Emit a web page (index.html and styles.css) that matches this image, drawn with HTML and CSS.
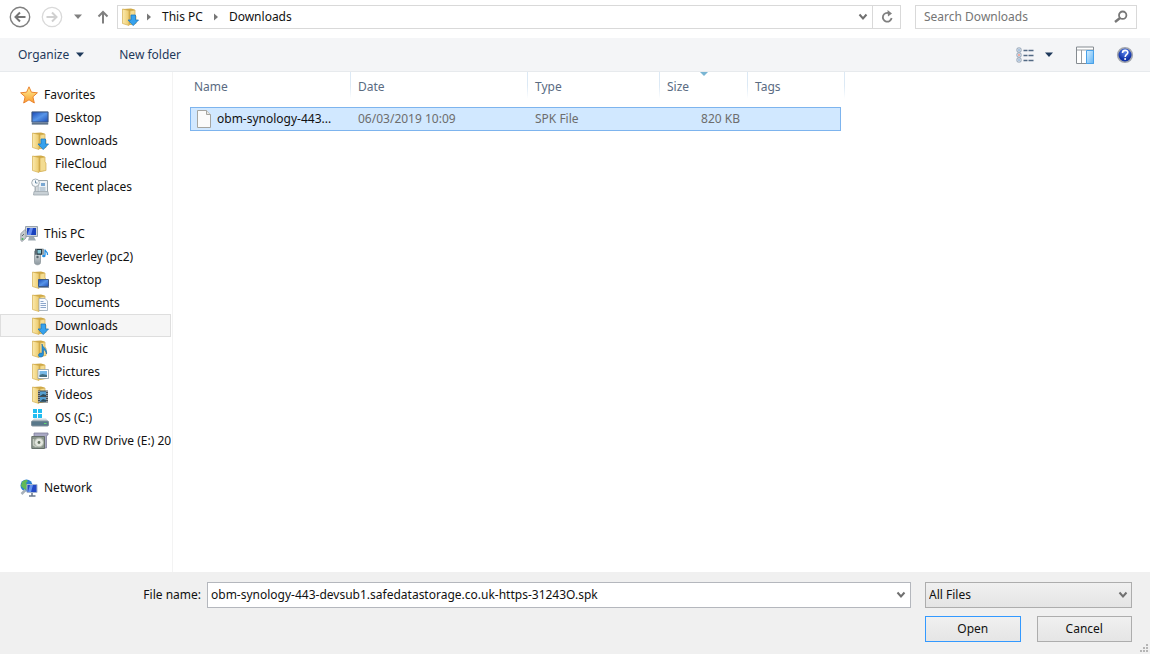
FILE: index.html
```html
<!DOCTYPE html>
<html lang="en">
<head>
<meta charset="utf-8">
<title>Open</title>
<link rel="stylesheet" href="styles.css">
</head>
<body>
<svg class="defs" aria-hidden="true">
  <defs>
    <linearGradient id="gold"><stop offset="0" stop-color="#fbeaae"/><stop offset="1" stop-color="#ecca6c"/></linearGradient>
    <linearGradient id="screen" x2="1" y2="1"><stop offset="0" stop-color="#1747b5"/><stop offset=".5" stop-color="#5795e8"/><stop offset="1" stop-color="#1d4eb8"/></linearGradient>
    <linearGradient id="metal" x2="0" y2="1"><stop offset="0" stop-color="#e3e7e9"/><stop offset="1" stop-color="#8b979e"/></linearGradient>
    <linearGradient id="starfill" x2="0" y2="1"><stop offset="0" stop-color="#fff39a"/><stop offset="1" stop-color="#f99b2c"/></linearGradient>
    <linearGradient id="pane" x2="1" y2="1"><stop offset="0" stop-color="#d5eeff"/><stop offset="1" stop-color="#62b4f4"/></linearGradient>
    <radialGradient id="helpfill" cy=".3"><stop offset="0" stop-color="#5b86ee"/><stop offset="1" stop-color="#1234a8"/></radialGradient>
    <symbol id="folder" viewBox="0 0 18 18">
      <path d="M2 1l8-.5 3.500 1V16L7 17z" fill="#cfa845"/>
      <path d="M9 3l5-1v5l1 1v7.500l-6 1z" fill="#f3dc92" stroke="#d3ae50" stroke-width=".7"/>
      <path d="M1.500 1L8 2.500v15L1.500 15.500z" fill="url(#gold)" stroke="#d3ae50" stroke-width=".7"/>
    </symbol>
    <symbol id="downloads" viewBox="0 0 18 18">
      <use href="#folder"/>
      <path d="M10 7h4.500v5h3L12.200 17.600 7 12h3z" fill="#36a2ee" stroke="#1b78c0" stroke-width=".8"/>
    </symbol>
    <symbol id="desktop" viewBox="0 0 18 18">
      <path d="M.5 2.500h17v13H.5z" fill="#a9b7c5"/>
      <path d="M1 3h16v10H1z" fill="url(#screen)" stroke="#3c5680"/>
      <path d="M1 14h16v1.500H1z" fill="#5f7389"/>
    </symbol>
    <symbol id="folder-desktop" viewBox="0 0 18 18">
      <use href="#folder"/>
      <path d="M7.500 8.500h10v7h-10z" fill="url(#screen)" stroke="#3c5987"/><path d="M7 16.500h11" stroke="#8898a9"/>
    </symbol>
    <symbol id="documents" viewBox="0 0 18 18">
      <use href="#folder"/>
      <path d="M8 4.500h6l2.500 2.500v9.500H8z" fill="#f8fbff" stroke="#9ba9b8" stroke-width=".8"/>
      <path d="M9.500 7.500h3m-3 2h5.500m-5.500 2h5.500m-5.500 2h5.500" stroke="#6e91bd" stroke-width=".8"/>
    </symbol>
    <symbol id="music" viewBox="0 0 18 18">
      <use href="#folder"/>
      <path d="M11 4c.5 4 5.500 4 4.500 10-.5-3-2-4-3-4.500v5c0 3-5 3.500-5 .8 0-2 2-2.500 3.500-2z" fill="#2793dc" stroke="#176aa8" stroke-width=".6"/>
    </symbol>
    <symbol id="pictures" viewBox="0 0 18 18">
      <use href="#folder"/>
      <path d="M7 6.500h10.500v9H7z" fill="#fff" stroke="#8e9eaa" stroke-width=".8"/>
      <path d="M8.500 8h7.500v6H8.500z" fill="#78b9e7"/><path d="M8.500 14v-2l3-1 4.500 1v2z" fill="#456f82"/>
    </symbol>
    <symbol id="videos" viewBox="0 0 18 18">
      <use href="#folder"/>
      <path d="M7 4.500h10v12H7z" fill="#474d53"/><path d="M9 5.500h6v4.500H9zm0 5.500h6v4.500H9z" fill="#559ed0"/>
      <path d="M9 10l3-2 3 1v1zm0 5.500l3-2.500 3 1v1.500z" fill="#294b5d"/>
      <path d="M8 5v11M16 5v11" stroke="#dde2e5" stroke-dasharray="1 1"/>
    </symbol>
    <symbol id="star" viewBox="0 0 18 18">
      <path d="M9 .8l2.400 5.400 6 .6-4.500 4 1.400 6.200L9 13.800 3.700 17l1.400-6.200-4.500-4 6-.6z" fill="url(#starfill)" stroke="#ea8430"/>
    </symbol>
    <symbol id="recent" viewBox="0 0 18 18">
      <path d="M7 2.500h9.500v12H7z" fill="#edf2f6" stroke="#9aa6ae"/>
      <path d="M10 5h4v3h-4z" fill="#79a7d2"/><path d="M8.500 10h6m-6 2h6" stroke="#8fa6b9"/>
      <path d="M3 13.500h14l.5 3.500H2.500z" fill="#c8d0d5" stroke="#9da7ad" stroke-width=".8"/>
      <path d="M4.500 9v5" stroke="#aab3b9" stroke-width="2"/>
      <circle cx="4.500" cy="4.800" r="3.800" fill="#f6f9fb" stroke="#a5aeb4"/><path d="M4.500 2.500v2.500h2" fill="none" stroke="#4c718d" stroke-width=".8"/>
    </symbol>
    <symbol id="computer" viewBox="0 0 18 18">
      <path d="M5.500 1.500h12v10h-12z" fill="#ccd3da" stroke="#9aa4ad"/>
      <path d="M7 3h9v7H7z" fill="#1a42bd"/><path d="M10 3h3l-2 7H7z" fill="#668cf0"/>
      <path d="M9 12h5l2 3.500H8z" fill="#9daab2"/>
      <path d="M.8 8.500L4.500 5l1.500 1v7l-4 3.500-1.200-1z" fill="#c3c9cc" stroke="#8b949a" stroke-width=".8"/><path d="M2 11l2-2" stroke="#5e676d"/><circle cx="2.500" cy="14" r="1" fill="#48b35a"/>
    </symbol>
    <symbol id="phone" viewBox="0 0 18 18">
      <path d="M3.500 3h6v11.500c0 3-6 3-6 0z" fill="url(#metal)" stroke="#8b959a" stroke-width=".8"/>
      <circle cx="6.500" cy="9" r="1.200" fill="#56656d"/>
      <path d="M4 .8h8.500v6H4z" fill="#263a44"/><path d="M5 1.500v5m6.500-5v5" stroke="#fff" stroke-dasharray="1 1"/><path d="M6.500 2h3.500v3.500H6.500z" fill="#83c6d6"/>
      <path d="M14 1.500v6M14 2c.5 2 3 1 2.500 5" fill="none" stroke="#258fe2" stroke-width="1.300"/><ellipse cx="12.800" cy="8" rx="1.700" ry="1.300" fill="#258fe2"/>
    </symbol>
    <symbol id="drive" viewBox="0 0 18 18">
      <path d="M2 0h4v4H2zm5 0h4v4H7zM2 5h4v4H2zm5 0h4v4H7z" fill="#21bdf1"/>
      <path d="M3 9.500h12l2.500 3H.5z" fill="#d0d8dd"/><rect x=".5" y="12" width="17" height="5" rx="1" fill="#59788a" stroke="#80909a"/><path d="M13 14.500h2.500" stroke="#61dc6e"/>
    </symbol>
    <symbol id="dvd" viewBox="0 0 18 18">
      <path d="M3 1h14v2l-1.500.5v12.500H3z" fill="#a9a9c4" stroke="#82829c" stroke-width=".8"/>
      <path d="M.8 4.500h12.700v12H.8z" fill="#8a958c" stroke="#66706a"/>
      <circle cx="8" cy="10.500" r="4.500" fill="#e3e7df" stroke="#a9b0a4"/><circle cx="8" cy="10.500" r="1.400" fill="#63705f"/>
      <path d="M2.500 7v6l3 2" fill="none" stroke="#c5ccc1" stroke-width="1.500"/>
    </symbol>
    <symbol id="network" viewBox="0 0 18 18">
      <circle cx="6.500" cy="6.500" r="6" fill="#287fcf"/><path d="M2 3c3-3 5-2 6-1L6 4l2 3-2 4-3-2-2-2z" fill="#61b957"/>
      <path d="M7 5.500h10v8H7z" fill="#2449c5" stroke="#a7b6ce"/><path d="M10 6h3l-2 7H8z" fill="#6694ee"/>
      <path d="M12 14v2.500M9 17h6.500" stroke="#68778c" stroke-width="1.500"/>
      <path d="M1.500 15l4-4" stroke="#a8b1ba" stroke-width="2.500"/>
    </symbol>
    <symbol id="chevron" viewBox="0 0 10 8"><path d="M1.500 1.500L5 5.500l3.500-4" fill="none" stroke="currentColor" stroke-width="2"/></symbol>
    <symbol id="caret-down" viewBox="0 0 10 6"><path d="M1 .5h8L5 5z" fill="currentColor"/></symbol>
    <symbol id="caret-right" viewBox="0 0 6 8"><path d="M1 .5v7L5 4z" fill="currentColor"/></symbol>
  </defs>
</svg>

<div class="dialog">
  <header class="navbar">
    <div class="history">
      <button class="plain" type="button" aria-label="Back">
        <svg class="round" viewBox="0 0 22 22"><circle cx="11" cy="11" r="9.700" fill="none" stroke="#808080" stroke-width="1.400"/><path d="M16.500 11H6.500m4.500-4.500L6.500 11l4.500 4.500" fill="none" stroke="#757575" stroke-width="2"/></svg>
      </button>
      <button class="plain" type="button" aria-label="Forward">
        <svg class="round" viewBox="0 0 22 22"><circle cx="11" cy="11" r="9.700" fill="none" stroke="#d9d9d9" stroke-width="1.300"/><path d="M5.500 11h10M11 6.500l4.500 4.500-4.500 4.500" fill="none" stroke="#d0d0d0" stroke-width="2"/></svg>
      </button>
      <button class="plain grey" type="button" aria-label="Recent locations"><svg class="caret"><use href="#caret-down"/></svg></button>
      <button class="plain up" type="button" aria-label="Up one level">
        <svg class="arrow" viewBox="0 0 12 14"><path d="M6 13.500V2M1.500 6.500L6 2l4.500 4.500" fill="none" stroke="#808080" stroke-width="2"/></svg>
      </button>
    </div>
    <div class="address">
      <svg class="icon"><use href="#downloads"/></svg>
      <div class="crumbs">
        <svg class="crumb-mark"><use href="#caret-right"/></svg>
        <button class="plain" type="button">This PC</button>
        <svg class="crumb-mark"><use href="#caret-right"/></svg>
        <button class="plain" type="button">Downloads</button>
      </div>
      <button class="plain history-drop" type="button" aria-label="Previous locations"><svg class="chevron"><use href="#chevron"/></svg></button>
      <button class="plain refresh" type="button" aria-label="Refresh">
        <svg class="small" viewBox="0 0 14 14"><path d="M9 3.200A4.400 4.400 0 1 0 11.600 8" fill="none" stroke="#808080" stroke-width="1.800"/><path d="M7.500 0l4.500 3.500-4 3z" fill="#808080"/></svg>
      </button>
    </div>
    <div class="search">
      <input class="search-input" type="search" placeholder="Search Downloads" aria-label="Search Downloads">
      <svg class="small" viewBox="0 0 14 14"><circle cx="8.700" cy="5.200" r="3.700" fill="none" stroke="#777" stroke-width="1.800"/><path d="M6 8l-5 4" stroke="#777" stroke-width="2.400"/></svg>
    </div>
  </header>

  <div class="toolbar">
    <button class="plain organize" type="button">Organize <svg class="caret"><use href="#caret-down"/></svg></button>
    <button class="plain" type="button">New folder</button>
    <div class="view-tools">
      <button class="plain views" type="button" aria-label="Change your view">
        <svg class="icon" viewBox="0 0 18 18"><g fill="#fff" stroke="#899bb0"><rect x="1" y="2" width="4" height="4" rx="1"/><rect x="1" y="7" width="4" height="4" rx="1"/><rect x="1" y="12" width="4" height="4" rx="1"/></g><path d="M2 9h2" stroke="#e55b49"/><path d="M2 4h2m-2 10h2" stroke="#5a8cc4"/><path d="M7.500 4.500h4m1 0h5m-10 5h4m1 0h5m-10 5h4m1 0h5" stroke="#536a84" stroke-width="1.300"/></svg>
        <svg class="caret"><use href="#caret-down"/></svg>
      </button>
      <button class="plain" type="button" aria-label="Show the preview pane">
        <svg class="icon" viewBox="0 0 18 18"><path d="M.5 1h17v16.500H.5z" fill="#fff" stroke="#858b91"/><path d="M1 4h16M5.500 4v13" stroke="#999ea3"/><path d="M10.500 4.500h7v13h-7z" fill="url(#pane)" stroke="#48a1e9"/></svg>
      </button>
      <button class="plain" type="button" aria-label="Get help">
        <svg class="icon" viewBox="0 0 18 18"><circle cx="9" cy="9" r="7.300" fill="url(#helpfill)" stroke="#a3a6ad" stroke-width="1.600"/><path d="M6.500 7c0-3.500 5.500-3.300 5.300-.3C11.700 8.400 9.300 8.600 9.200 11" fill="none" stroke="#fff" stroke-width="1.600"/><circle cx="9.100" cy="13" r="1" fill="#fff"/></svg>
      </button>
    </div>
  </div>

  <main class="content">
    <nav class="tree" aria-label="Folders">
      <section class="group">
        <a class="node root" href="#"><svg class="icon"><use href="#star"/></svg>Favorites</a>
        <a class="node" href="#"><svg class="icon"><use href="#desktop"/></svg>Desktop</a>
        <a class="node" href="#"><svg class="icon"><use href="#downloads"/></svg>Downloads</a>
        <a class="node" href="#"><svg class="icon"><use href="#folder"/></svg>FileCloud</a>
        <a class="node" href="#"><svg class="icon"><use href="#recent"/></svg>Recent places</a>
      </section>
      <section class="group">
        <a class="node root" href="#"><svg class="icon"><use href="#computer"/></svg>This PC</a>
        <a class="node" href="#"><svg class="icon"><use href="#phone"/></svg>Beverley (pc2)</a>
        <a class="node" href="#"><svg class="icon"><use href="#folder-desktop"/></svg>Desktop</a>
        <a class="node" href="#"><svg class="icon"><use href="#documents"/></svg>Documents</a>
        <a class="node current" href="#" aria-current="true"><svg class="icon"><use href="#downloads"/></svg>Downloads</a>
        <a class="node" href="#"><svg class="icon"><use href="#music"/></svg>Music</a>
        <a class="node" href="#"><svg class="icon"><use href="#pictures"/></svg>Pictures</a>
        <a class="node" href="#"><svg class="icon"><use href="#videos"/></svg>Videos</a>
        <a class="node" href="#"><svg class="icon"><use href="#drive"/></svg>OS (C:)</a>
        <a class="node" href="#"><svg class="icon"><use href="#dvd"/></svg>DVD RW Drive (E:) 20</a>
      </section>
      <section class="group">
        <a class="node root" href="#"><svg class="icon"><use href="#network"/></svg>Network</a>
      </section>
    </nav>
    <div class="files">
      <table class="list">
        <colgroup><col class="c-name"><col class="c-date"><col class="c-type"><col class="c-size"><col class="c-tags"><col class="c-edge"></colgroup>
        <thead>
          <tr><th scope="col">Name</th><th scope="col">Date</th><th scope="col">Type</th><th scope="col" class="sorted" aria-sort="descending">Size<svg class="sort" viewBox="0 0 10 5"><path d="M1 0h8L5 4z" fill="#79b5d3"/></svg></th><th scope="col" colspan="2">Tags</th></tr>
        </thead>
        <tbody>
          <tr class="selected">
            <td><span class="file"><svg class="icon" viewBox="0 0 18 18"><path d="M2.500 .5h9l4 4v13h-13z" fill="#fbfbfa" stroke="#a5a5a0"/><path d="M11.500 .5v4h4" fill="#e7e7e3" stroke="#a5a5a0"/></svg>obm-synology-443...</span></td>
            <td>06/03/2019 10:09</td><td>SPK File</td><td class="size">820 KB</td><td></td>
          </tr>
        </tbody>
      </table>
    </div>
  </main>

  <footer class="footer">
    <label class="name-label" for="filename">File name:</label>
    <div class="combo">
      <input class="name-input" id="filename" type="text" value="obm-synology-443-devsub1.safedatastorage.co.uk-https-31243O.spk">
      <button class="plain" type="button" aria-label="Recent file names"><svg class="chevron"><use href="#chevron"/></svg></button>
    </div>
    <div class="filter">
      <select class="filter-select" aria-label="File type"><option>All Files</option></select>
      <svg class="chevron"><use href="#chevron"/></svg>
    </div>
    <div class="actions">
      <button class="action primary" type="button">Open</button>
      <button class="action" type="button">Cancel</button>
    </div>
    <svg class="grip" viewBox="0 0 10 10" fill="#b5b5b5"><path d="M7 0h2v2H7zM4 3h2v2H4zm3 0h2v2H7zM1 6h2v2H1zm3 0h2v2H4zm3 0h2v2H7z"/></svg>
  </footer>
</div>
</body>
</html>
```

FILE: styles.css
```css
* { box-sizing: border-box; }

body {
  margin: 0;
  background: #fff;
  color: #111;
  font: 12px/20px "Noto Sans", "Open Sans", sans-serif;
}

button, input, select { font: inherit; color: inherit; }
svg { display: block; flex: none; }

.defs { position: absolute; width: 0; height: 0; }
.icon { width: 18px; height: 18px; }
.small { width: 14px; height: 14px; }
.chevron { width: 10px; height: 8px; color: #707070; }
.caret { width: 10px; height: 6px; }

.plain {
  display: flex;
  align-items: center;
  justify-content: center;
  padding: 0;
  border: 0;
  background: none;
}

.dialog { display: flex; flex-direction: column; min-height: 100vh; }

.navbar {
  display: flex;
  align-items: center;
  padding: 5px 13px 9px 9px;
}
.history { display: flex; align-items: center; gap: 10px; width: 108px; }
.round { width: 22px; height: 22px; }
.grey { color: #808080; }
.up { margin-left: 4px; }
.arrow { width: 12px; height: 14px; }

.address {
  display: flex;
  align-items: center;
  flex: 1;
  height: 24px;
  padding-left: 3px;
  border: 1px solid #d9d9d9;
}
.crumbs { display: flex; align-items: center; gap: 10px; padding-left: 7px; }
.crumb-mark { width: 6px; height: 8px; color: #777; }
.history-drop { margin-left: auto; width: 18px; height: 22px; }
.refresh { width: 28px; height: 22px; border-left: 1px solid #d9d9d9; }

.search {
  display: flex;
  align-items: center;
  width: 222px;
  height: 24px;
  margin-left: 14px;
  padding: 0 8px;
  border: 1px solid #d9d9d9;
}
.search-input {
  flex: 1;
  min-width: 0;
  padding: 0;
  border: 0;
  outline: 0;
  background: none;
}
.search-input::placeholder { color: #757575; opacity: 1; }

.toolbar {
  display: flex;
  align-items: center;
  height: 34px;
  padding: 0 16px 0 18px;
  border-bottom: 1px solid #e7eaed;
  background: #f4f5f7;
  color: #1e395b;
}
.organize { gap: 6px; margin-right: 34px; }
.view-tools { display: flex; gap: 22px; margin-left: auto; }
.views { gap: 10px; }

.content { display: flex; flex: 1; }

.tree {
  width: 173px;
  flex: none;
  padding-top: 11px;
  border-right: 1px solid #f3f3f3;
}
.group { margin-bottom: 24px; }
.node {
  display: flex;
  align-items: center;
  gap: 6px;
  height: 23px;
  margin-right: 1px;
  padding-left: 31px;
  overflow: hidden;
  color: inherit;
  text-decoration: none;
  white-space: nowrap;
}
.root { padding-left: 20px; }
.current {
  padding-left: 30px;
  border: 1px solid #dedede;
  background: #f6f6f6;
}

.files { flex: 1; min-width: 0; padding-left: 17px; }
.list {
  width: 655px;
  table-layout: fixed;
  border-collapse: separate;
  border-spacing: 0;
}
.c-name { width: 161px; }
.c-date { width: 177px; }
.c-type { width: 132px; }
.c-size { width: 88px; }
.c-tags { width: 93px; }
.c-edge { width: 4px; }

.list th {
  height: 35px;
  padding: 5px 8px 10px 7px;
  border-right: 1px solid;
  border-image: linear-gradient(#dce9f5 40%, #fff 75%) 1;
  color: #5a6b82;
  font-weight: 400;
  line-height: 20px;
  text-align: left;
}
.list th:first-child { padding-left: 4px; }
.sorted { position: relative; }
.sort { position: absolute; top: 0; left: 39px; width: 10px; height: 5px; }

.list td {
  height: 24px;
  padding: 0 8px 0 7px;
  border: solid #7db4ee;
  border-width: 1px 0;
  background: #d1e8ff;
  color: #6d6d6d;
  white-space: nowrap;
}
.list td:first-child { padding: 0 0 0 4px; border-left-width: 1px; color: #111; }
.list td:last-child { border-right-width: 1px; }
.list .size { text-align: right; }
.file { display: flex; align-items: center; gap: 4px; }

.footer {
  position: relative;
  display: grid;
  grid-template-columns: 201px 1fr 207px;
  row-gap: 8px;
  padding: 10px 18px 12px 0;
  background: #f0f0f0;
}
.name-label { align-self: center; text-align: right; }
.combo {
  display: flex;
  align-items: center;
  height: 26px;
  margin: 0 14px 0 6px;
  padding: 0 4px 0 3px;
  border: 1px solid #b4b7bd;
  background: #fff;
}
.name-input {
  flex: 1;
  min-width: 0;
  padding: 0;
  border: 0;
  outline: 0;
  background: none;
}
.filter { display: grid; align-items: center; }
.filter-select {
  grid-area: 1 / 1;
  height: 26px;
  padding: 0 3px;
  border: 1px solid #adadad;
  border-radius: 0;
  appearance: none;
  background: linear-gradient(#f0f0f0, #e4e4e4);
}
.filter .chevron {
  grid-area: 1 / 1;
  justify-self: end;
  margin-right: 4px;
  pointer-events: none;
}
.actions { display: flex; grid-column: 3; gap: 16px; }
.action {
  flex: 1;
  height: 26px;
  padding: 0;
  border: 1px solid #adadad;
  background: linear-gradient(#f0f0f0, #e5e5e5);
}
.primary { border-color: #3399ff; }
.grip { position: absolute; right: 1px; bottom: 0; width: 10px; height: 10px; }
```
